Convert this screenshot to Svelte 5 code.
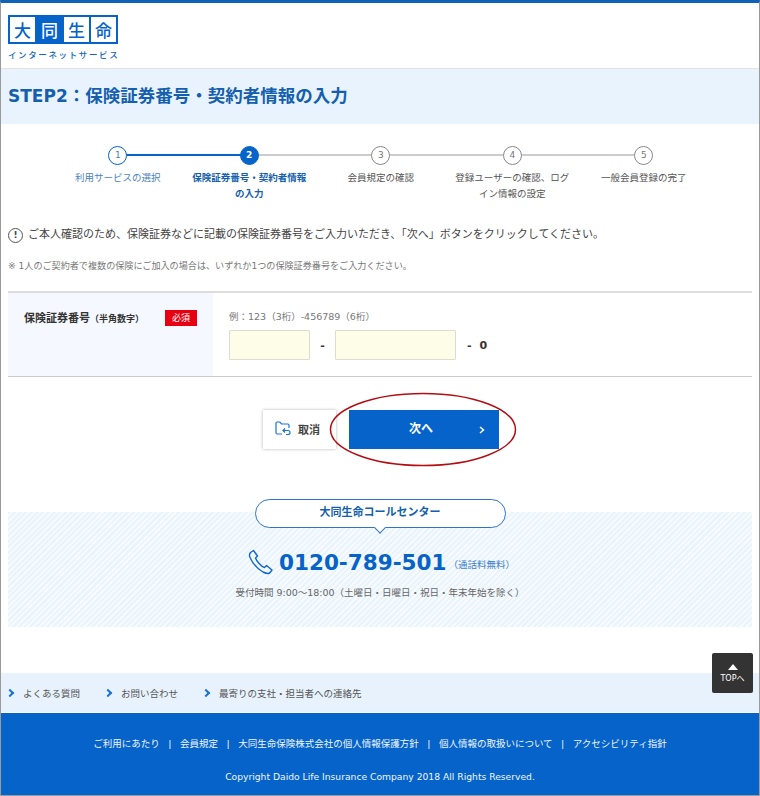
<script>
  const steps = [
    { no: 1, label: "利用サービスの選択", state: "done" },
    { no: 2, label: "保険証券番号・契約者情報の入力", state: "current" },
    { no: 3, label: "会員規定の確認", state: "" },
    { no: 4, label: "登録ユーザーの確認、ログイン情報の設定", state: "" },
    { no: 5, label: "一般会員登録の完了", state: "" }
  ];
  const logo = ["大", "同", "生", "命"];
  const quickLinks = ["よくある質問", "お問い合わせ", "最寄りの支社・担当者への連絡先"];
  const footerLinks = ["ご利用にあたり", "会員規定", "大同生命保険株式会社の個人情報保護方針", "個人情報の取扱いについて", "アクセシビリティ指針"];
</script>

<div class="page">
  <header class="header">
    <div class="logo">
      {#each logo as ch, i}
        <span class="logo-cell" class:inverse={i === 1}>{ch}</span>
      {/each}
    </div>
    <div class="logo-sub">インターネットサービス</div>
  </header>

  <h1 class="title"><span class="title-step">STEP2</span>：保険証券番号・契約者情報の入力</h1>

  <ol class="steps">
    {#each steps as step}
      <li class="step {step.state}">
        <span class="circle">{step.no}</span>
        <span class="step-label">{step.label}</span>
      </li>
    {/each}
  </ol>

  <p class="notice">
    <span class="notice-icon">!</span>
    ご本人確認のため、保険証券などに記載の保険証券番号をご入力いただき、「次へ」ボタンをクリックしてください。
  </p>
  <p class="note">※ 1人のご契約者で複数の保険にご加入の場合は、いずれか1つの保険証券番号をご入力ください。</p>

  <div class="form-row">
    <div class="form-head">
      <span class="form-label">保険証券番号<small>（半角数字）</small></span>
      <span class="required">必須</span>
    </div>
    <div class="form-body">
      <div class="example">例：123（3桁）-456789（6桁）</div>
      <div class="inputs">
        <input class="input-short" type="text" aria-label="保険証券番号1" />
        <span class="dash">-</span>
        <input class="input-long" type="text" aria-label="保険証券番号2" />
        <span class="dash suffix">- 0</span>
      </div>
    </div>
  </div>

  <div class="actions">
    <button class="btn-cancel">
      <svg width="16" height="15" viewBox="0 0 16 15" fill="none" stroke="#1a73d8" stroke-width="1.2">
        <path d="M7 13H2.200A1.200 1.200 0 0 1 1 11.800V2.200A1.200 1.200 0 0 1 2.200 1h2.600l1.700 2h6.300A1.200 1.200 0 0 1 14 4.200V7" />
        <path d="M8 9.500h5a2 2 0 0 1 0 4h-2" />
        <path d="M10 7.500 8 9.500l2 2" />
      </svg>
      取消
    </button>
    <button class="btn-next">
      <span>次へ</span>
      <svg class="chevron" width="6" height="8" viewBox="0 0 6 8" fill="none" stroke="#fff" stroke-width="1.500">
        <path d="M1 1l3.500 3L1 7" />
      </svg>
    </button>
    <svg class="ellipse" width="188" height="75" viewBox="0 0 188 75" fill="none">
      <ellipse cx="94" cy="37.500" rx="92.500" ry="36" stroke="#b30d12" stroke-width="1.500" />
    </svg>
  </div>

  <section class="call">
    <div class="call-pill">大同生命コールセンター</div>
    <div class="call-tel">
      <svg width="26" height="26" viewBox="0 0 26 26" fill="none" stroke="#0f68c9" stroke-width="1.400" stroke-linejoin="round">
        <path d="M2.500 3.500 5.500 1.500 9.500 7 7.500 9C8.500 12 13 17.500 16.500 18.500L18.500 16.500 24 21 22 23.500C21 25 18 24.500 15 23 9 19.500 4.500 14 2 8.500 1.300 6.500 1.500 4.500 2.500 3.500Z" />
      </svg>
      <span class="tel-number">0120-789-501</span>
      <span class="tel-free">（通話料無料）</span>
    </div>
    <p class="call-hours">受付時間 9:00～18:00（土曜日・日曜日・祝日・年末年始を除く）</p>
  </section>

  <nav class="quick">
    {#each quickLinks as link}
      <a href="#top" class="quick-link"><i class="quick-arrow"></i>{link}</a>
    {/each}
  </nav>

  <footer class="footer">
    <div class="footer-links">
      {#each footerLinks as link, i}
        {#if i > 0}<span class="sep">|</span>{/if}
        <a href="#top">{link}</a>
      {/each}
    </div>
    <div class="copyright">Copyright Daido Life Insurance Company 2018 All Rights Reserved.</div>
  </footer>

  <a href="#top" class="to-top"><i class="to-top-arrow"></i>TOPへ</a>
</div>

<style>
  :global(body) {
    margin: 0;
    background: #fff;
  }

  .page {
    position: relative;
    box-sizing: border-box;
    width: 760px;
    height: 796px;
    overflow: hidden;
    border-top: 3px solid #0f62b8;
    border-left: 1px solid #9a9a9a;
    border-right: 1px solid #9a9a9a;
    border-bottom: 1px solid #9a9a9a;
    font-family: "DejaVu Sans", "Noto Sans CJK JP", sans-serif;
    color: #444;
  }

  .header {
    box-sizing: border-box;
    height: 66px;
    padding: 12px 0 0 7px;
    border-bottom: 1px solid #e2e2e2;
  }

  .logo {
    display: flex;
    width: 110px;
    height: 29px;
    box-sizing: border-box;
    border: 2px solid #0563c9;
    background: #0563c9;
    gap: 2px;
  }

  .logo-cell {
    flex: 1;
    display: flex;
    align-items: center;
    justify-content: center;
    background: #fff;
    color: #0563c9;
    font: 500 17px/1 "Noto Sans CJK JP", sans-serif;
  }

  .logo-cell.inverse {
    background: #0563c9;
    color: #fff;
  }

  .logo-sub {
    margin-top: 3px;
    color: #1566bd;
    font: 500 8.500px/14px "Noto Sans CJK JP", sans-serif;
    letter-spacing: 1.620px;
    white-space: nowrap;
  }

  .title {
    box-sizing: border-box;
    height: 55px;
    margin: 0;
    padding: 0 7px;
    background: #e8f3fd;
    color: #155fae;
    font-size: 17.500px;
    font-weight: 700;
    line-height: 55px;
    white-space: nowrap;
  }

  .title-step {
    font-size: 17px;
  }

  .steps {
    display: grid;
    grid-template-columns: repeat(5, 131.500px);
    margin: 0;
    padding: 22px 0 0 51px;
    list-style: none;
  }

  .step {
    position: relative;
    display: flex;
    flex-direction: column;
    align-items: center;
    color: #555;
  }

  .step:not(:last-child)::after {
    content: "";
    position: absolute;
    top: 8px;
    left: 50%;
    width: 100%;
    height: 2px;
    background: #ccc;
  }

  .step.done::after {
    background: #0563c9;
  }

  .circle {
    position: relative;
    z-index: 1;
    box-sizing: border-box;
    width: 19px;
    height: 19px;
    border: 1px solid #888;
    border-radius: 50%;
    background: #fff;
    color: #777;
    font-size: 9px;
    line-height: 17px;
    text-align: center;
  }

  .step.done .circle {
    border: 1.500px solid #0563c9;
    color: #3d7fc9;
  }

  .step.current .circle {
    border-color: #0563c9;
    background: #0563c9;
    color: #fff;
    font-weight: 700;
  }

  .step-label {
    box-sizing: border-box;
    width: 122px;
    margin-top: 5px;
    font-size: 9.500px;
    line-height: 16px;
    text-align: center;
  }

  .step.done .step-label {
    color: #4b82c0;
  }

  .step.current .step-label {
    color: #155fae;
    font-weight: 700;
  }

  .notice {
    display: flex;
    align-items: center;
    gap: 5px;
    height: 20px;
    margin: 23px 0 0 7px;
    font-size: 11px;
    line-height: 20px;
    white-space: nowrap;
    color: #444;
  }

  .notice-icon {
    box-sizing: border-box;
    width: 15px;
    height: 15px;
    border: 1px solid #555;
    border-radius: 50%;
    color: #444;
    font-size: 9px;
    font-weight: 700;
    line-height: 13px;
    text-align: center;
  }

  .note {
    margin: 14px 0 0 7px;
    color: #777;
    font-size: 9.100px;
    line-height: 14px;
    white-space: nowrap;
  }

  .form-row {
    display: flex;
    box-sizing: border-box;
    height: 86px;
    margin: 18px 7px 0;
    border-top: 2px solid #ddd;
    border-bottom: 1px solid #ccc;
  }

  .form-head {
    display: flex;
    justify-content: space-between;
    box-sizing: border-box;
    width: 205px;
    padding: 17px 16px 0;
    background: #f5f8fe;
  }

  .form-label {
    color: #333;
    font-size: 11px;
    font-weight: 700;
    line-height: 18px;
    white-space: nowrap;
  }

  .form-label small {
    font-size: 9px;
  }

  .required {
    width: 32px;
    height: 16px;
    background: #e60012;
    color: #fff;
    font-size: 9px;
    line-height: 16px;
    text-align: center;
  }

  .form-body {
    padding: 17px 0 0 16px;
  }

  .example {
    color: #777;
    font-size: 9.500px;
    line-height: 14px;
    white-space: nowrap;
  }

  .inputs {
    display: flex;
    align-items: center;
    margin-top: 6px;
  }

  .inputs input {
    box-sizing: border-box;
    height: 30px;
    padding: 0;
    border: 1px solid #dcdcd0;
    border-radius: 1px;
    background: #fdfde8;
  }

  .input-short { width: 81px; }
  .input-long { width: 121px; }

  .dash {
    width: 25px;
    color: #333;
    font-size: 11px;
    font-weight: 700;
    text-align: center;
  }

  .suffix {
    width: auto;
    margin-left: 11px;
    word-spacing: 4px;
  }

  .actions {
    position: relative;
    display: flex;
    justify-content: center;
    gap: 13px;
    margin-top: 33px;
    padding-left: 2px;
  }

  .actions button {
    height: 39px;
    border: 0;
    font-family: inherit;
    cursor: pointer;
  }

  .btn-cancel {
    display: flex;
    align-items: center;
    justify-content: center;
    gap: 7px;
    width: 73px;
    padding: 0 4px 2px 0;
    background: #fff;
    box-shadow: 0 0 3px rgba(0, 0, 0, 0.3);
    color: #444;
    font-size: 11px;
    font-weight: 700;
  }

  .btn-next {
    position: relative;
    width: 150px;
    padding: 0;
    background: #0563c9;
    color: #fff;
    font-size: 12px;
    font-weight: 700;
  }

  .btn-next span {
    position: relative;
    left: -3px;
    top: -2px;
  }

  .chevron {
    position: absolute;
    right: 14px;
    top: 16px;
  }

  .ellipse {
    position: absolute;
    left: 328px;
    top: -18px;
    pointer-events: none;
  }

  .call {
    box-sizing: border-box;
    height: 115px;
    margin: 63px 7px 0;
    background: repeating-linear-gradient(135deg, #eaf4fd 0 2px, #f7fbfe 2px 4px);
    text-align: center;
  }

  .call-pill {
    position: relative;
    box-sizing: border-box;
    width: 251px;
    height: 29px;
    margin: 0 auto;
    top: -13px;
    border: 1.500px solid #2e74c9;
    border-radius: 15px;
    background: #fff;
    color: #155fae;
    font-size: 11px;
    font-weight: 700;
    line-height: 26px;
  }

  .call-pill::after {
    content: "";
    position: absolute;
    left: 50%;
    bottom: -5px;
    width: 7px;
    height: 7px;
    margin-left: -4px;
    border-right: 1.500px solid #2e74c9;
    border-bottom: 1.500px solid #2e74c9;
    background: #fff;
    transform: rotate(45deg);
  }

  .call-tel {
    display: flex;
    align-items: center;
    justify-content: center;
    margin-top: 6px;
    padding-left: 3px;
    height: 30px;
  }

  .call-tel svg {
    margin-right: 5px;
  }

  .tel-number {
    color: #0563c9;
    font-size: 21.500px;
    font-weight: 700;
    white-space: nowrap;
  }

  .tel-free {
    margin: 4px 0 0 2px;
    color: #3f7fca;
    font-size: 9.500px;
    white-space: nowrap;
  }

  .call-hours {
    margin: 8px 0 0;
    color: #666;
    font-size: 9.500px;
    line-height: 16px;
    white-space: nowrap;
  }

  .quick {
    display: flex;
    box-sizing: border-box;
    height: 39px;
    margin-top: 46px;
    padding-left: 6px;
    background: #e7f2fd;
    align-items: center;
  }

  .quick-link {
    display: flex;
    align-items: center;
    margin-right: 25px;
    color: #555;
    font-size: 9.500px;
    text-decoration: none;
    white-space: nowrap;
  }

  .quick-arrow {
    width: 4px;
    height: 4px;
    margin-right: 10px;
    border-top: 2px solid #1a73d8;
    border-right: 2px solid #1a73d8;
    transform: rotate(45deg);
  }

  .footer {
    box-sizing: border-box;
    height: 84px;
    margin-top: 1px;
    padding-top: 24px;
    background: #0563c9;
    color: #f0f6fc;
    text-align: center;
  }

  .footer-links {
    display: flex;
    justify-content: center;
    gap: 8.500px;
    font-size: 9.500px;
    line-height: 14px;
    white-space: nowrap;
  }

  .footer-links a {
    color: inherit;
    text-decoration: none;
  }

  .copyright {
    margin-top: 19px;
    font-size: 9.200px;
    line-height: 14px;
    white-space: nowrap;
  }

  .to-top {
    position: absolute;
    top: 650px;
    left: 711px;
    display: flex;
    flex-direction: column;
    align-items: center;
    box-sizing: border-box;
    width: 41px;
    height: 40px;
    padding-top: 11px;
    border-radius: 2px;
    background: #333;
    color: #fff;
    font-size: 8px;
    line-height: 12px;
    text-decoration: none;
  }

  .to-top-arrow {
    width: 0;
    height: 0;
    margin-bottom: 3px;
    border-left: 5px solid transparent;
    border-right: 5px solid transparent;
    border-bottom: 6px solid #fff;
  }
</style>
